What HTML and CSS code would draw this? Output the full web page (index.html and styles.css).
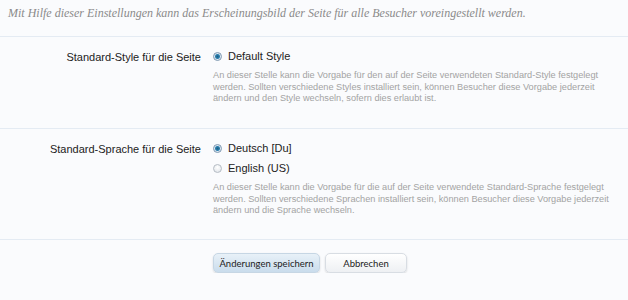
FILE: index.html
```html
<!DOCTYPE html>
<html lang="de">
<head>
    <meta charset="UTF-8">
    <title>Einstellungen</title>
    <link rel="stylesheet" href="styles.css">
</head>
<body>
    <p class="intro">Mit Hilfe dieser Einstellungen kann das Erscheinungsbild der Seite für alle Besucher voreingestellt werden.</p>

    <form class="options">
        <div class="option-row">
            <div class="option-label">Standard-Style für die Seite</div>
            <div class="option-field">
                <label class="radio"><span class="radio-dot checked"></span>Default Style</label>
                <p class="explain">An dieser Stelle kann die Vorgabe für den auf der Seite verwendeten Standard-Style festgelegt werden. Sollten verschiedene Styles installiert sein, können Besucher diese Vorgabe jederzeit ändern und den Style wechseln, sofern dies erlaubt ist.</p>
            </div>
        </div>

        <div class="option-row">
            <div class="option-label">Standard-Sprache für die Seite</div>
            <div class="option-field">
                <label class="radio"><span class="radio-dot checked"></span>Deutsch [Du]</label>
                <label class="radio"><span class="radio-dot"></span>English (US)</label>
                <p class="explain">An dieser Stelle kann die Vorgabe für die auf der Seite verwendete Standard-Sprache festgelegt werden. Sollten verschiedene Sprachen installiert sein, können Besucher diese Vorgabe jederzeit ändern und die Sprache wechseln.</p>
            </div>
        </div>

        <div class="submit-row">
            <button type="button" class="btn primary">Änderungen speichern</button>
            <button type="button" class="btn">Abbrechen</button>
        </div>
    </form>
</body>
</html>
```

FILE: styles.css
```css
body {
    margin: 0;
    background-color: #fafbfd;
    font-family: "Liberation Sans", Arial, sans-serif;
    color: #222;
}
.intro {
    margin: 0;
    padding: 6px 8px 0;
    height: 30px;
    font-family: "Liberation Serif", serif;
    font-style: italic;
    font-size: 12px;
    color: #8a8a8a;
    border-bottom: 1px solid #e4ebf3;
}
.option-row {
    display: grid;
    grid-template-columns: 201px 1fr;
    gap: 12px;
    padding: 11px 0 0;
    height: 80px;
    border-bottom: 1px solid #e4ebf3;
}
.option-row + .option-row {
    height: 99px;
}
.option-label {
    text-align: right;
    font-size: 11px;
    line-height: 16px;
    padding-top: 1px;
}
.option-field {
    padding-right: 16px;
}
.radio {
    display: flex;
    align-items: center;
    gap: 6px;
    font-size: 11px;
    line-height: 16px;
    margin-bottom: 4px;
}
.radio-dot {
    width: 9px;
    height: 9px;
    border-radius: 50%;
    border: 1px solid #b5bcc4;
    background: radial-gradient(circle at 50% 35%, #ffffff, #dde2e7);
    box-sizing: border-box;
    flex-shrink: 0;
}
.radio-dot.checked {
    border-color: #7d97b0;
    background: radial-gradient(circle, #1b5f85 0, #2c7fae 2px, #dbe8f2 3px, #eef3f8 5px);
}
.explain {
    margin: 6px 0 0;
    font-size: 9.2px;
    line-height: 11.5px;
    color: #a3a3a3;
}
.submit-row {
    display: flex;
    gap: 5px;
    padding: 13px 0 0 213px;
}
.btn {
    height: 20px;
    width: 82px;
    padding: 0;
    white-space: nowrap;
    font-family: Lato, sans-serif;
    font-size: 9.5px;
    color: #222;
    border: 1px solid #d8dde3;
    border-radius: 5px;
    background: linear-gradient(#ffffff, #eef0f3);
    box-shadow: 0 1px 2px rgba(0,0,0,0.15);
    cursor: pointer;
}
.btn.primary {
    width: 107px;
    background: linear-gradient(#e8f1f8, #c9dcec);
    border-color: #c6d6e4;
}
```
